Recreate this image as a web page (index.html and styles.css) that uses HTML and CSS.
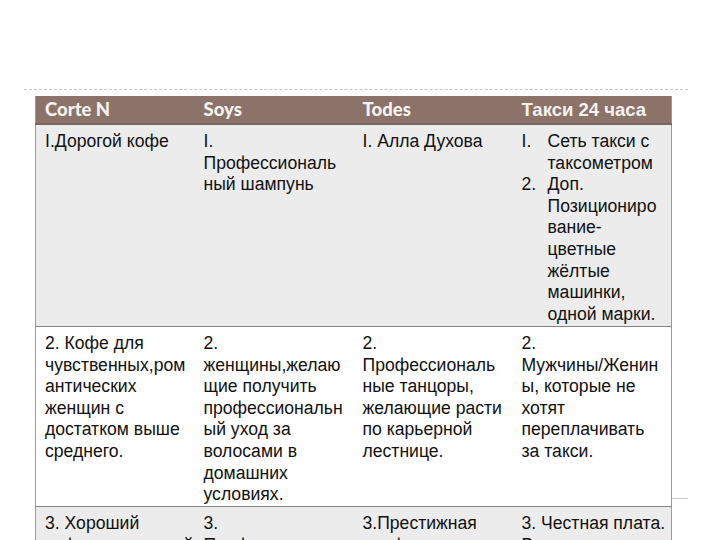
FILE: index.html
```html
<!DOCTYPE html>
<html lang="ru">
<head>
<meta charset="utf-8">
<link rel="stylesheet" href="styles.css">
</head>
<body>
<div class="slide">
  <div class="rule"></div>
  <table class="grid">
    <colgroup>
      <col class="c"><col class="c"><col class="c"><col class="c">
    </colgroup>
    <thead>
      <tr class="head">
        <th>Corte N</th>
        <th>Soys</th>
        <th>Todes</th>
        <th class="ar">Такси 24 часа</th>
      </tr>
    </thead>
    <tbody>
      <tr class="shade r1">
        <td>I.Дорогой кофе</td>
        <td>I.<br>Профессиональ<br>ный шампунь</td>
        <td>I. Алла Духова</td>
        <td>
          <div class="li"><span class="n">I.</span><span>Сеть такси с<br>таксометром</span></div>
          <div class="li"><span class="n">2.</span><span>Доп.<br>Позициониро<br>вание-<br>цветные<br>жёлтые<br>машинки,<br>одной марки.</span></div>
        </td>
      </tr>
      <tr class="plain r2">
        <td>2. Кофе для<br>чувственных,ром<br>антических<br>женщин с<br>достатком выше<br>среднего.</td>
        <td>2.<br>женщины,желаю<br>щие получить<br>профессиональн<br>ый уход за<br>волосами в<br>домашних<br>условиях.</td>
        <td>2.<br>Профессиональ<br>ные танцоры,<br>желающие расти<br>по карьерной<br>лестнице.</td>
        <td>2.<br>Мужчины/Женин<br>ы, которые не<br>хотят<br>переплачивать<br>за такси.</td>
      </tr>
      <tr class="shade r3">
        <td>3. Хороший<br>кофе по разумной<br>цене</td>
        <td>3.<br>Профессиональ<br>ный уход</td>
        <td>3.Престижная<br>профессия</td>
        <td>3. Честная плата.<br>Все машины</td>
      </tr>
    </tbody>
  </table>
  <div class="tick"></div>
</div>
</body>
</html>
```
FILE: styles.css
```css
html, body {
  margin: 0;
  padding: 0;
  background: #ffffff;
  width: 720px;
  height: 540px;
  overflow: hidden;
}
.slide {
  position: relative;
  width: 720px;
  height: 540px;
  padding-top: 89px;
  box-sizing: border-box;
}
.rule {
  margin-left: 24px;
  width: 664px;
  height: 0;
  border-top: 1px dashed #c4c4c4;
}
.grid {
  margin-top: 6px;
  margin-left: 35px;
  width: 637px;
  border-collapse: collapse;
  table-layout: fixed;
  border-left: 1px solid #9a9a9a;
  border-right: 1px solid #9a9a9a;
  font-family: "Liberation Sans", Arial, sans-serif;
  font-size: 17.6px;
  line-height: 21.6px;
  color: #111111;
}
.c { width: 159px; }
.head th {
  background: #8b7369;
  color: #f6f2ef;
  font-family: Lato, "Open Sans", sans-serif;
  font-weight: 900;
  font-size: 18.5px;
  text-align: left;
  height: 27px;
  padding: 0 0 0 9px;
  vertical-align: middle;
  border-bottom: 2px solid #7c655c;
}
.head th.ar {
  font-family: "Liberation Sans", Arial, sans-serif;
  font-weight: 700;
  font-size: 18.5px;
}
td {
  vertical-align: top;
  padding: 6px 0 0 9px;
  white-space: nowrap;
  overflow: hidden;
}
.shade td { background: #ececec; }
.plain td { background: #ffffff; }
.r1 td { height: 195px; }
.r2 td { height: 173px; border-top: 1px solid #858585; }
.r3 td { border-top: 1px solid #858585; }
.li { display: flex; }
.n { width: 26px; flex: none; }
.tick {
  position: absolute;
  left: 672px;
  top: 498px;
  width: 16px;
  border-top: 1px solid #c8c8c8;
}
```
